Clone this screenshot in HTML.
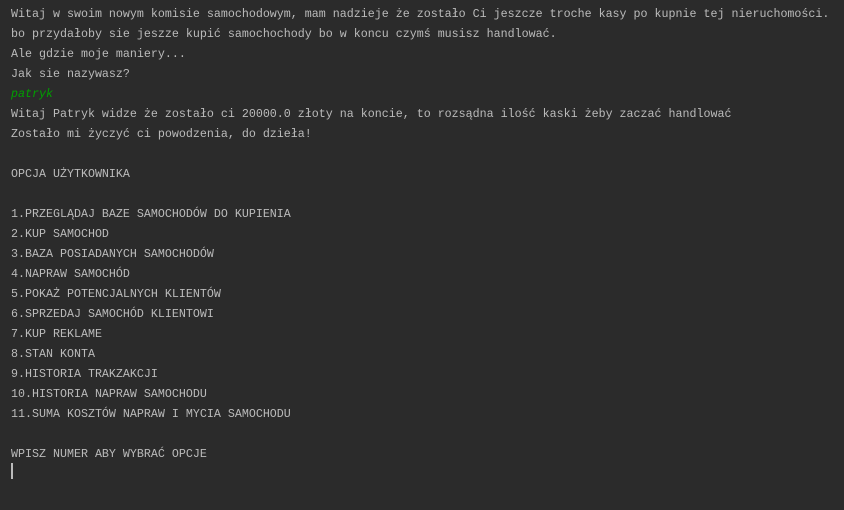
<!DOCTYPE html>
<html><head><meta charset="utf-8"><style>
html,body{margin:0;padding:0;background:#2b2b2b;width:844px;height:510px;overflow:hidden}
pre{margin:0;position:absolute;left:11px;top:4px;font-family:"Liberation Mono","DejaVu Sans Mono",monospace;font-size:11.66px;line-height:20px;color:#bbbbbb}
.g{color:#00a000;font-style:italic}
.cur{position:absolute;left:11px;top:463px;width:2px;height:16px;background:#bbbbbb}
</style></head><body>
<pre>Witaj w swoim nowym komisie samochodowym, mam nadzieje że zostało Ci jeszcze troche kasy po kupnie tej nieruchomości.
bo przydałoby sie jeszze kupić samochochody bo w koncu czymś musisz handlować.
Ale gdzie moje maniery...
Jak sie nazywasz?
<span class="g">patryk</span>
Witaj Patryk widze że zostało ci 20000.0 złoty na koncie, to rozsądna ilość kaski żeby zaczać handlować
Zostało mi życzyć ci powodzenia, do dzieła!

OPCJA UŻYTKOWNIKA

1.PRZEGLĄDAJ BAZE SAMOCHODÓW DO KUPIENIA
2.KUP SAMOCHOD
3.BAZA POSIADANYCH SAMOCHODÓW
4.NAPRAW SAMOCHÓD
5.POKAŻ POTENCJALNYCH KLIENTÓW
6.SPRZEDAJ SAMOCHÓD KLIENTOWI
7.KUP REKLAME
8.STAN KONTA
9.HISTORIA TRAKZAKCJI
10.HISTORIA NAPRAW SAMOCHODU
11.SUMA KOSZTÓW NAPRAW I MYCIA SAMOCHODU

WPISZ NUMER ABY WYBRAĆ OPCJE</pre>
<div class="cur"></div>
</body></html>
